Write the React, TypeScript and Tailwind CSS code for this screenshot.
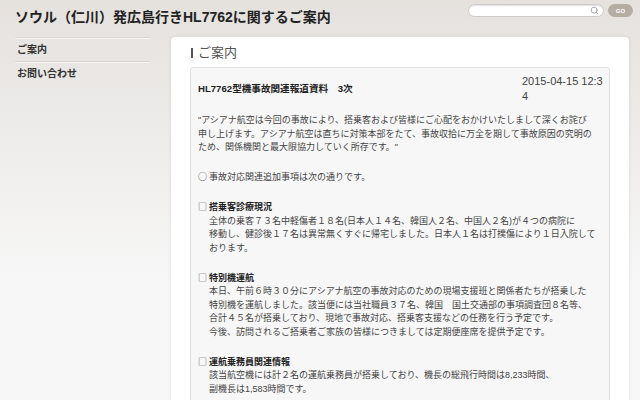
import React from 'react';
import { Search } from 'lucide-react';

const font = { fontFamily: '"Liberation Sans", "Noto Sans CJK JP", sans-serif' };
const cjk = { fontFamily: '"Noto Sans CJK JP", sans-serif' };

const sections = [
  {
    head: '搭乗客診療現況',
    lines: [
      '全体の乗客７３名中軽傷者１８名(日本人１４名、韓国人２名、中国人２名)が４つの病院に',
      '移動し、健診後１７名は異常無くすぐに帰宅しました。日本人１名は打撲傷により１日入院して',
      'おります。',
    ],
  },
  {
    head: '特別機運航',
    lines: [
      '本日、午前６時３０分にアシアナ航空の事故対応のための現場支援班と関係者たちが搭乗した',
      '特別機を運航しました。該当便には当社職員３７名、韓国　国土交通部の事項調査団８名等、',
      '合計４５名が搭乗しており、現地で事故対応、搭乗客支援などの任務を行う予定です。',
      '今後、訪問されるご搭乗者ご家族の皆様につきましては定期便座席を提供予定です。',
    ],
  },
  {
    head: '運航乗務員関連情報',
    lines: [
      '該当航空機には計２名の運航乗務員が搭乗しており、機長の総飛行時間は8,233時間、',
      '副機長は1,583時間です。',
    ],
  },
];

export default function App() {
  return (
    <div
      style={font}
      className="h-[400px] overflow-hidden bg-linear-to-b from-[#e5e2de] to-[#f7f7f7] to-70%"
    >
      {/* header */}
      <div className="flex h-[37px] items-start justify-between pl-[15px] pr-[7px]">
        <h1 className="pt-[7px] text-[14px] font-bold leading-[20px] text-[#222]">
          ソウル（仁川）発広島行きHL7762に関するご案内
        </h1>
        <div className="flex items-center gap-[4px] pt-[4px]">
          <div className="flex h-[13px] w-[136px] items-center justify-end rounded-full border border-[#cfcac5] bg-white pr-[4px] shadow-[inset_0_1px_1px_rgba(0,0,0,0.12)]">
            <Search size={9} strokeWidth={2.2} className="text-[#999]" />
          </div>
          <button className="flex h-[13px] w-[25px] items-center justify-center rounded-full bg-[#b5aca4] text-[6px] font-bold leading-none text-white">
            GO
          </button>
        </div>
      </div>

      <div className="flex pl-[15px]">
        {/* sidebar */}
        <div className="w-[135px] text-[10px] font-bold text-[#333]">
          <div className="flex h-[24px] items-center border-t border-[#d9d5d0] pl-[2px] shadow-[inset_0_1px_0_#f6f5f4]">
            ご案内
          </div>
          <div className="flex h-[24px] items-center border-t border-[#d9d5d0] pl-[2px] shadow-[inset_0_1px_0_#f6f5f4]">
            お問い合わせ
          </div>
        </div>

        {/* main panel */}
        <div className="ml-[21px] h-[400px] w-[458px] rounded-t-[4px] bg-white px-[19px] pt-[8px] shadow-[0_0_4px_rgba(0,0,0,0.08)]">
          <div className="mb-[6px] flex h-[16px] items-center pl-[1px]">
            <span className="h-[10px] w-[2px] bg-[#555]" />
            <span className="pl-[5px] text-[13px] leading-[16px] text-[#555]">ご案内</span>
          </div>

          <div className="h-[400px] rounded-[3px] border border-[#e2e2e2] bg-[#f7f7f7] px-[7px] pt-[6px] text-[#444]">
            <div className="flex items-center justify-between">
              <div className="text-[9.6px] font-bold text-[#222]">HL7762型機事故関連報道資料　3次</div>
              <div className="w-[80px] whitespace-nowrap text-[11px] leading-[15px] text-[#444]">
                <div>2015-04-15 12:3</div>
                <div>4</div>
              </div>
            </div>

            <div className="mt-[10px] whitespace-nowrap text-[9px] leading-[13.5px]">
              <div>
                <div>"アシアナ航空は今回の事故により、搭乗客および皆様にご心配をおかけいたしまして深くお詫び</div>
                <div>申し上げます。アシアナ航空は直ちに対策本部をたて、事故収拾に万全を期して事故原因の究明の</div>
                <div>ため、関係機関と最大限協力していく所存です。"</div>
              </div>

              <div className="mt-[15.5px]">
                <span style={cjk}>○ </span>事故対応関連追加事項は次の通りです。
              </div>

              {sections.map((s) => (
                <div key={s.head} className="mt-[15.5px]">
                  <div>
                    <span style={cjk}>□ </span>
                    <span className="font-bold text-[#222]">{s.head}</span>
                  </div>
                  <div className="pl-[11px]">
                    {s.lines.map((l) => (
                      <div key={l}>{l}</div>
                    ))}
                  </div>
                </div>
              ))}
            </div>
          </div>
        </div>
      </div>
    </div>
  );
}
